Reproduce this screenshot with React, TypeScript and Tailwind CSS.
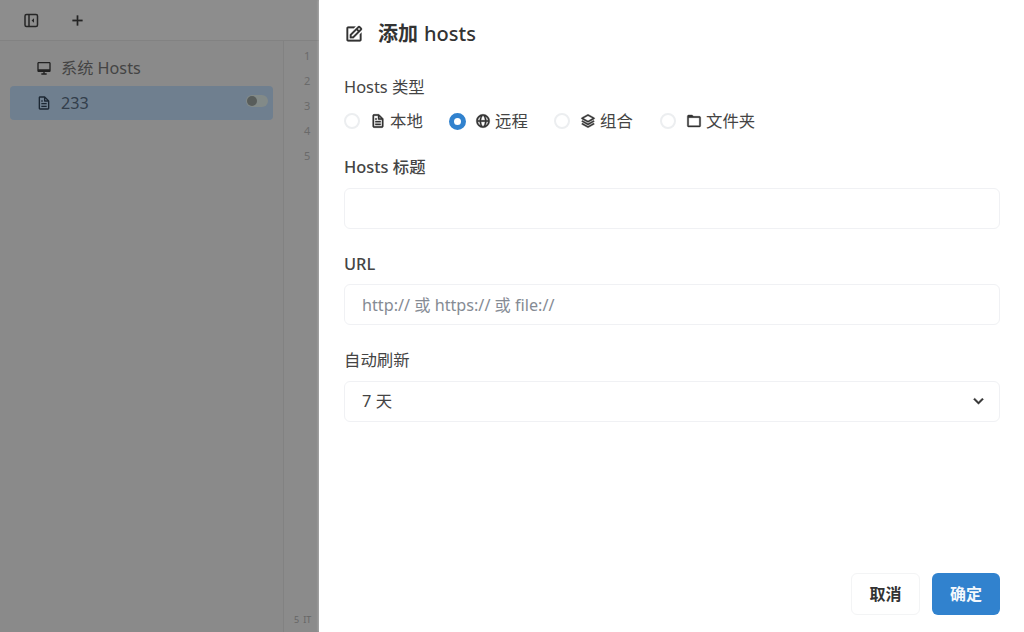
import { BiChevronDown, BiDesktop, BiEdit, BiFile, BiFolder, BiGlobe, BiLayer, BiPlus } from "react-icons/bi"

const fontStack = "font-['Noto_Sans','Noto_Sans_CJK_SC',sans-serif]"

const hostTypes = [
  { label: "本地", icon: BiFile, checked: false, width: "w-[105px]" },
  { label: "远程", icon: BiGlobe, checked: true, width: "w-[105px]" },
  { label: "组合", icon: BiLayer, checked: false, width: "w-[106px]" },
  { label: "文件夹", icon: BiFolder, checked: false, width: "w-auto" },
]

function SidebarIcon() {
  return (
    <svg width="15" height="15" viewBox="0 0 15 15" fill="none" stroke="currentColor" strokeWidth="1.5">
      <rect x="1" y="1.5" width="12.5" height="12" rx="1.5" />
      <path d="M5 1.5v12" />
      <path d="M10 5.2v4.6L7.6 7.5z" fill="currentColor" stroke="none" />
    </svg>
  )
}

function Background() {
  return (
    <div className="flex h-full w-[319px] shrink-0 flex-col bg-[#8a8a8a]">
      <div className="flex h-[41px] shrink-0 items-center border-b border-[#828282] bg-[#8d8d8d] pl-[24px] text-[#262626]">
        <SidebarIcon />
        <BiPlus className="ml-[30px] text-[17px] stroke-[0.4]" />
      </div>
      <div className="flex min-h-0 flex-1">
        <div className="w-[283px] shrink-0 px-[10px] pt-[9px]">
          <div className="flex h-[36px] items-center pl-[26px] text-[16.2px] text-[#444444]">
            <BiDesktop className="mr-[9px] text-[16px] text-[#222]" />
            系统 Hosts
          </div>
          <div className="flex h-[34px] items-center rounded-[4px] bg-[#6f7f8f] pl-[26px] pr-[5px] text-[16.2px] text-[#333e4b]">
            <BiFile className="mr-[9px] text-[16px] text-[#1c2733]" />
            233
            <div className="ml-auto flex h-[12px] w-[22px] -translate-y-[2px] items-center rounded-full bg-[#828a88] p-[1px]">
              <div className="h-[10px] w-[10px] rounded-full bg-[#585d5b]" />
            </div>
          </div>
        </div>
        <div className="flex min-w-0 flex-1 flex-col border-l border-[#828282] bg-[#8b8b8b]">
          <div className="flex-1 pl-[20px] pt-[2px] text-[11px] leading-[25px] text-[#6a6a6a]">
            <div>1</div>
            <div>2</div>
            <div>3</div>
            <div>4</div>
            <div>5</div>
          </div>
          <div className="flex h-[24px] items-center gap-[4px] whitespace-nowrap pl-[10px] text-[9px] text-[#666]">
            <span>5</span>
            <span>IT</span>
          </div>
        </div>
      </div>
    </div>
  )
}

export default function App() {
  return (
    <div className={`flex h-[632px] w-[1024px] overflow-hidden bg-white ${fontStack}`}>
      <Background />

      {/* 添加 hosts 抽屉 */}
      <div className="flex h-full flex-1 flex-col pl-[25px] pr-[24px] text-[16.4px] text-[#444444] shadow-[-1px_0_2px_rgba(255,255,255,0.25)]">
        <div className="flex h-[67px] shrink-0 items-center text-[20px] text-[#333333]">
          <BiEdit className="mr-[14px] text-[20px] stroke-[0.3]" />
          <span className="font-semibold">添加</span>
          <span className="ml-[6px] font-medium">hosts</span>
        </div>

        <div className="leading-[24px]">
          <div className="mt-[8px]">Hosts 类型</div>
          <div className="mt-[10px] flex h-[24px] items-center">
            {hostTypes.map((t) => (
              <div key={t.label} className={`flex items-center ${t.width}`}>
                {t.checked ? (
                  <span className="h-[17px] w-[17px] rounded-full border-[5px] border-[#3182ce] bg-white" />
                ) : (
                  <span className="h-[16px] w-[16px] rounded-full border-2 border-[#eceef0]" />
                )}
                <t.icon className={`${t.checked ? "ml-[9px]" : "ml-[10px]"} text-[16px] stroke-[0.6] text-[#333333]`} />
                <span className="ml-[4px]">{t.label}</span>
              </div>
            ))}
          </div>

          <div className="mt-[22px] font-medium">Hosts 标题</div>
          <input className="mt-[9px] block h-[41px] w-full rounded-[6px] border border-[#f0f1f4] bg-white px-[16px] outline-none" />

          <div className="mt-[23px] font-medium">URL</div>
          <input
            className="mt-[8px] block h-[41px] w-full rounded-[6px] border border-[#f0f1f4] bg-white px-[17px] text-[16.2px] outline-none placeholder:text-[#858b94]"
            placeholder="http:// 或 https:// 或 file://"
          />

          <div className="mt-[23px]">自动刷新</div>
          <div className="mt-[9px] flex h-[41px] items-center justify-between rounded-[6px] border border-[#f0f1f4] bg-white pb-[2px] pl-[17px] pr-[10px]">
            <span>7 天</span>
            <BiChevronDown className="text-[21px] stroke-[0.5] text-[#333333]" />
          </div>
        </div>

        <div className="mb-[17px] mt-auto flex justify-end gap-[12px] text-[16px]">
          <button className="h-[42px] w-[69px] rounded-[6px] border border-[#f3f4f5] bg-white font-semibold text-[#333333]">
            取消
          </button>
          <button className="h-[42px] w-[68px] rounded-[6px] bg-[#3182ce] font-semibold text-[#f4f8fc]">确定</button>
        </div>
      </div>
    </div>
  )
}
